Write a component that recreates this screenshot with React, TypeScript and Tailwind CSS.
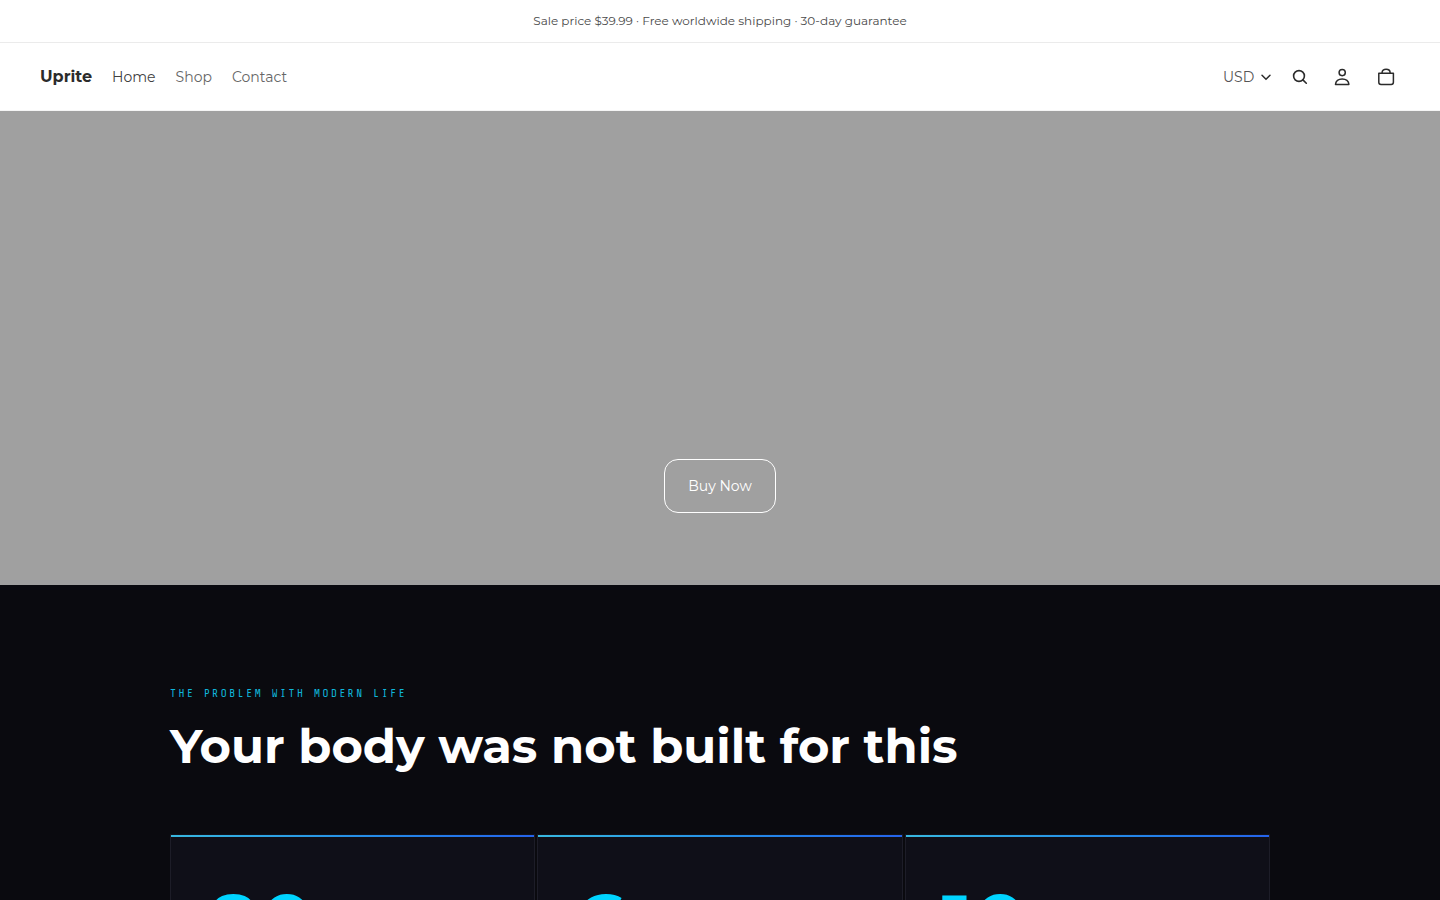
const navLinks = [
  { label: 'Home', href: '#home', color: 'text-[#404040]' },
  { label: 'Shop', href: '#shop', color: 'text-[#666666]' },
  { label: 'Contact', href: '#contact', color: 'text-[#666666]' },
]

const stats = ['80', '6', '10']

const SearchIcon = () => (
  <svg viewBox="0 0 20 20" className="h-5 w-5" fill="none" stroke="currentColor" strokeWidth="1.6" strokeLinecap="round">
    <circle cx="11" cy="9" r="5.4" />
    <path d="M14.9 12.9l3.4 3.3" />
  </svg>
)

const AccountIcon = () => (
  <svg viewBox="0 0 20 20" className="h-5 w-5" fill="none" stroke="currentColor" strokeWidth="1.5" strokeLinejoin="round">
    <circle cx="10.2" cy="5.6" r="3.1" />
    <path d="M3.5 17.4c.2-3.2 2.9-5.5 6.7-5.5s6.5 2.3 6.7 5.5z" />
  </svg>
)

const CartIcon = () => (
  <svg viewBox="0 0 20 20" className="h-5 w-5" fill="none" stroke="currentColor" strokeWidth="1.5" strokeLinejoin="round">
    <path d="M2.8 6.2h14.6v9a2.2 2.2 0 0 1-2.2 2.2H5a2.2 2.2 0 0 1-2.2-2.2z" />
    <path d="M6.1 6.2v-.6c0-2.2 1.6-3.4 4-3.4s4 1.2 4 3.4v.6" />
  </svg>
)

const iconButton = 'flex h-11 w-11 items-center justify-center'

const Header = () => (
  <header className="bg-white text-[#2b2b2b]">
    <p className="border-b border-[#ebebeb] py-3 text-center text-xs leading-[18px] text-[#4a4a4a]">
      Sale price $39.99 · Free worldwide shipping · 30-day guarantee
    </p>
    <div className="flex h-17 items-center justify-between border-b border-[#f5f5f5] pr-8 pl-10">
      <nav className="flex items-center gap-5 text-sm">
        <a href="#top" className="text-base font-bold">
          Uprite
        </a>
        {navLinks.map((link) => (
          <a key={link.label} href={link.href} className={link.color}>
            {link.label}
          </a>
        ))}
      </nav>
      <div className="flex items-center">
        <div className="mr-1 flex items-center gap-[5px]">
          <select aria-label="Currency" className="appearance-none bg-transparent text-sm text-[#555555]">
            <option>USD</option>
          </select>
          <svg viewBox="0 0 12 12" className="h-3 w-3" fill="none" stroke="currentColor" strokeWidth="1.5" strokeLinecap="round">
            <path d="M2 4.2l4 4 4-4" />
          </svg>
        </div>
        <button type="button" aria-label="Search" className={iconButton}>
          <SearchIcon />
        </button>
        <button type="button" aria-label="Account" className={iconButton}>
          <AccountIcon />
        </button>
        <button type="button" aria-label="Cart" className={iconButton}>
          <CartIcon />
        </button>
      </div>
    </div>
  </header>
)

const Hero = () => (
  <section className="flex justify-center bg-[#a0a0a0] pt-87 pb-18">
    <button type="button" className="rounded-[14px] border border-white px-[23px] py-4 text-sm text-white">
      Buy Now
    </button>
  </section>
)

const StatCard = ({ value }: { value: string }) => (
  <article className="h-80 border border-[#1d1d28] border-t-[#111118] bg-[#0f0f18]">
    <div className="h-0.5 bg-linear-to-r from-[#38b8e0] to-[#2563eb]" />
    <p className="px-9 pt-[47px] text-[80px] leading-20 font-bold text-[#00d4ff]">{value}</p>
  </article>
)

const Problem = () => (
  <section className="flex-1 bg-[#0a0a0f] px-10 pt-25">
    <div className="mx-auto max-w-275">
      <p className="font-['Share_Tech_Mono','Liberation_Mono',monospace] text-[11px] leading-[18px] tracking-[0.23em] text-[#0fb5da] uppercase">
        The problem with modern life
      </p>
      <h2 className="mt-3.5 text-5xl leading-[58px] font-bold text-white">Your body was not built for this</h2>
      <div className="mt-[59px] grid grid-cols-3 gap-0.5">
        {stats.map((value) => (
          <StatCard key={value} value={value} />
        ))}
      </div>
    </div>
  </section>
)

const App = () => (
  <div className="flex h-screen flex-col overflow-hidden bg-[#0a0a0f] font-['Montserrat','Inter',sans-serif]">
    <Header />
    <main className="flex flex-1 flex-col">
      <Hero />
      <Problem />
    </main>
  </div>
)

export default App
